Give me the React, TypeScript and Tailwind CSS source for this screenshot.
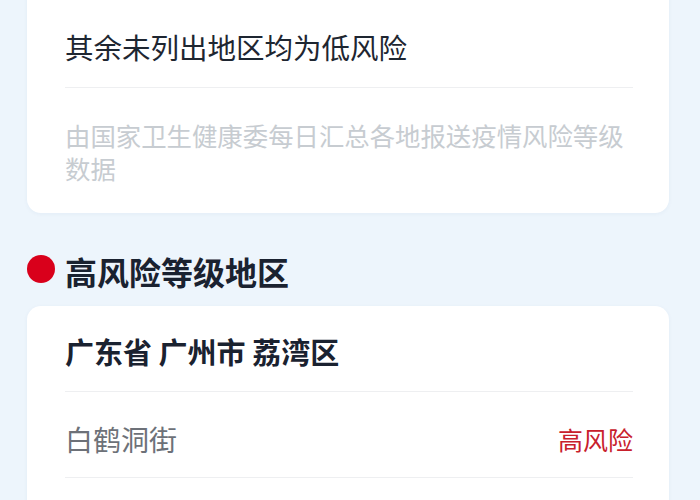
/*
 * Risk-area list screen (scrolled): summary card, then the
 * high-risk section header with its region card.
 */

type Street = {
  name: string
  level: string
}

type Region = {
  title: string
  streets: Street[]
}

const HIGH_RISK: Region[] = [
  {
    title: '广东省 广州市 荔湾区',
    streets: [{ name: '白鹤洞街', level: '高风险' }],
  },
]

const FONT = "font-['Noto_Sans_CJK_SC','Noto_Sans',sans-serif]"

function SummaryCard() {
  return (
    <div className="-mt-[20px] rounded-[14px] bg-white pl-[38px] pr-[36px] pb-[28px] shadow-[0_1px_4px_rgba(40,80,140,0.05)]">
      <div className="border-b border-[#eeeff1] pt-[47px] pb-[20px] text-[28.5px] leading-[40px] text-[#1e2631]">
        其余未列出地区均为低风险
      </div>
      <p className="pt-[31px] text-[25.4px] leading-[33px] text-[#c7ccd1]">
        由国家卫生健康委每日汇总各地报送疫情风险等级数据
      </p>
    </div>
  )
}

function SectionHeader({ label }: { label: string }) {
  return (
    <div className="mt-[38px] mb-[15px] flex items-center gap-[10px]">
      <span className="h-[28px] w-[28px] shrink-0 -translate-y-[2px] rounded-full bg-[#d9001b]" />
      <h2 className="text-[32px] font-bold leading-[40px] text-[#1a2230]">{label}</h2>
    </div>
  )
}

function RegionCard({ region }: { region: Region }) {
  return (
    <div className="rounded-[14px] bg-white pl-[38px] pr-[36px] pb-[40px] shadow-[0_1px_4px_rgba(40,80,140,0.05)]">
      <div className="border-b border-[#eeeff1] pt-[25px] pb-[20px] text-[29px] font-bold leading-[40px] text-[#1a2230]">
        {region.title}
      </div>
      {region.streets.map((s) => (
        <div
          key={s.name}
          className="flex items-center justify-between border-b border-[#eeeff1] pt-[27px] pb-[18px] leading-[40px]"
        >
          <span className="text-[28px] text-[#6d7178]">{s.name}</span>
          <span className="text-[25px] text-[#c8202c]">{s.level}</span>
        </div>
      ))}
    </div>
  )
}

export default function App() {
  return (
    <div className={`${FONT} min-h-[500px] overflow-hidden bg-[#edf5fc] pl-[27px] pr-[31px]`}>
      <SummaryCard />
      <SectionHeader label="高风险等级地区" />
      {HIGH_RISK.map((r) => (
        <RegionCard key={r.title} region={r} />
      ))}
    </div>
  )
}
